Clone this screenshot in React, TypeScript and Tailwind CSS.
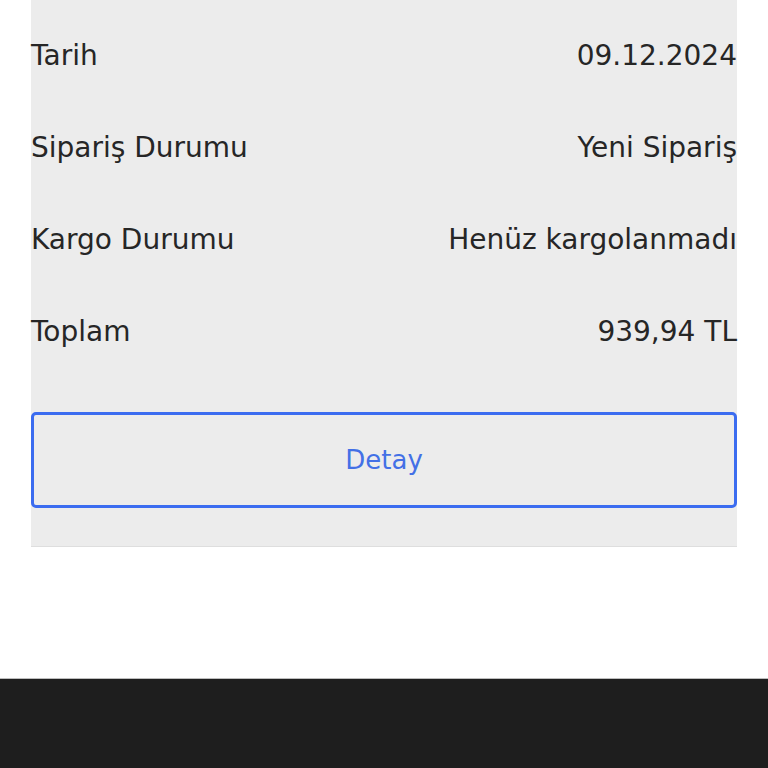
const rows = [
  { label: "Tarih", value: "09.12.2024" },
  { label: "Sipariş Durumu", value: "Yeni Sipariş" },
  { label: "Kargo Durumu", value: "Henüz kargolanmadı" },
  { label: "Toplam", value: "939,94 TL" },
];

export default function App() {
  return (
    <div className="flex min-h-[768px] flex-col bg-white" style={{ fontFamily: '"DejaVu Sans", "Noto Sans", sans-serif' }}>
      <div className="px-[31px]">
        <div className="border-b border-[#dedede] bg-[#ececec] pt-[10px] pb-[38px]">
          {rows.map((r) => (
            <div key={r.label} className="flex h-[92px] items-center justify-between text-[28px] text-[#262626]">
              <span>{r.label}</span>
              <span>{r.value}</span>
            </div>
          ))}
          <button
            type="button"
            className="mt-[34px] flex h-[96px] w-full items-center justify-center rounded-[5px] border-[3px] border-[#3b6cf0] text-[26px] text-[#4370e6]"
          >
            Detay
          </button>
        </div>
      </div>
      <div className="h-[131px]" />
      <footer className="h-[90px] border-t border-[#bdbdbd] bg-[#1e1e1e]" />
    </div>
  );
}
